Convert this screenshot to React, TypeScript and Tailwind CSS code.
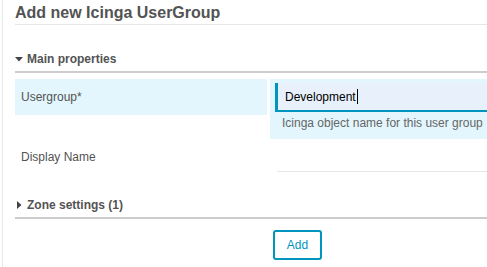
import React from 'react';

const Caret = ({ open }: { open: boolean }) => (
  <svg width="8" height="8" viewBox="0 0 8 8" className="shrink-0 fill-[#444]">
    {open ? <path d="M0 2 L8 2 L4 6.5 Z" /> : <path d="M2 0 L6.5 4 L2 8 Z" />}
  </svg>
);

export default function App() {
  return (
    <div className="h-[267px] w-[487px] overflow-hidden bg-white font-['Liberation_Sans',Arial,sans-serif] text-[#535353]">
      <div className="ml-[2px] h-full w-[560px] border-l border-[#e8e8e8] pl-[12px]">
        <h1 className="border-b border-[#e6e6e6] pt-[4px] pb-[3px] text-[16px] leading-[17px] font-bold text-[#535353]">
          Add new Icinga UserGroup
        </h1>

        {/* Main properties */}
        <div className="mt-[22px] flex h-[26px] items-center gap-[4px] border-b-2 border-[#ccc]">
          <Caret open />
          <span className="text-[12px] font-bold">Main properties</span>
        </div>

        <div className="mt-[6px] grid grid-cols-[252px_1fr] gap-x-[3px]">
          <div className="h-[36px] bg-[#e3f6fd] pl-[6px] text-[12px] leading-[36px]">Usergroup*</div>
          <div className="bg-[#e3f6fd] pt-[4px] pb-[8px] pl-[5px]">
            <div className="flex h-[29px] items-center border-b-2 border-l-[3px] border-[#0095bf] bg-[#e8f0fc] pl-[7px] text-[12px] text-black">
              Development
              <span className="ml-[1px] inline-block h-[15px] w-px bg-black" />
            </div>
            <div className="pt-[4px] pl-[7px] text-[12px] leading-[15px] text-[#666]">
              Icinga object name for this user group
            </div>
          </div>

          <div className="h-[36px] pl-[6px] text-[12px] leading-[36px]">Display Name</div>
          <div className="pl-[7px]">
            <div className="h-[33px] border-b border-[#e6e6e6]" />
          </div>
        </div>

        {/* Zone settings */}
        <div className="mt-[18px] flex h-[26px] items-center gap-[4px] border-b-2 border-[#ccc]">
          <Caret open={false} />
          <span className="text-[12px] font-bold">Zone settings (1)</span>
        </div>

        <div className="mt-[11px] pl-[258px]">
          <button className="h-[30px] w-[49px] rounded-[3px] border-2 border-[#0095bf] bg-white text-[12px] text-[#0095bf]">
            Add
          </button>
        </div>
      </div>
    </div>
  );
}
